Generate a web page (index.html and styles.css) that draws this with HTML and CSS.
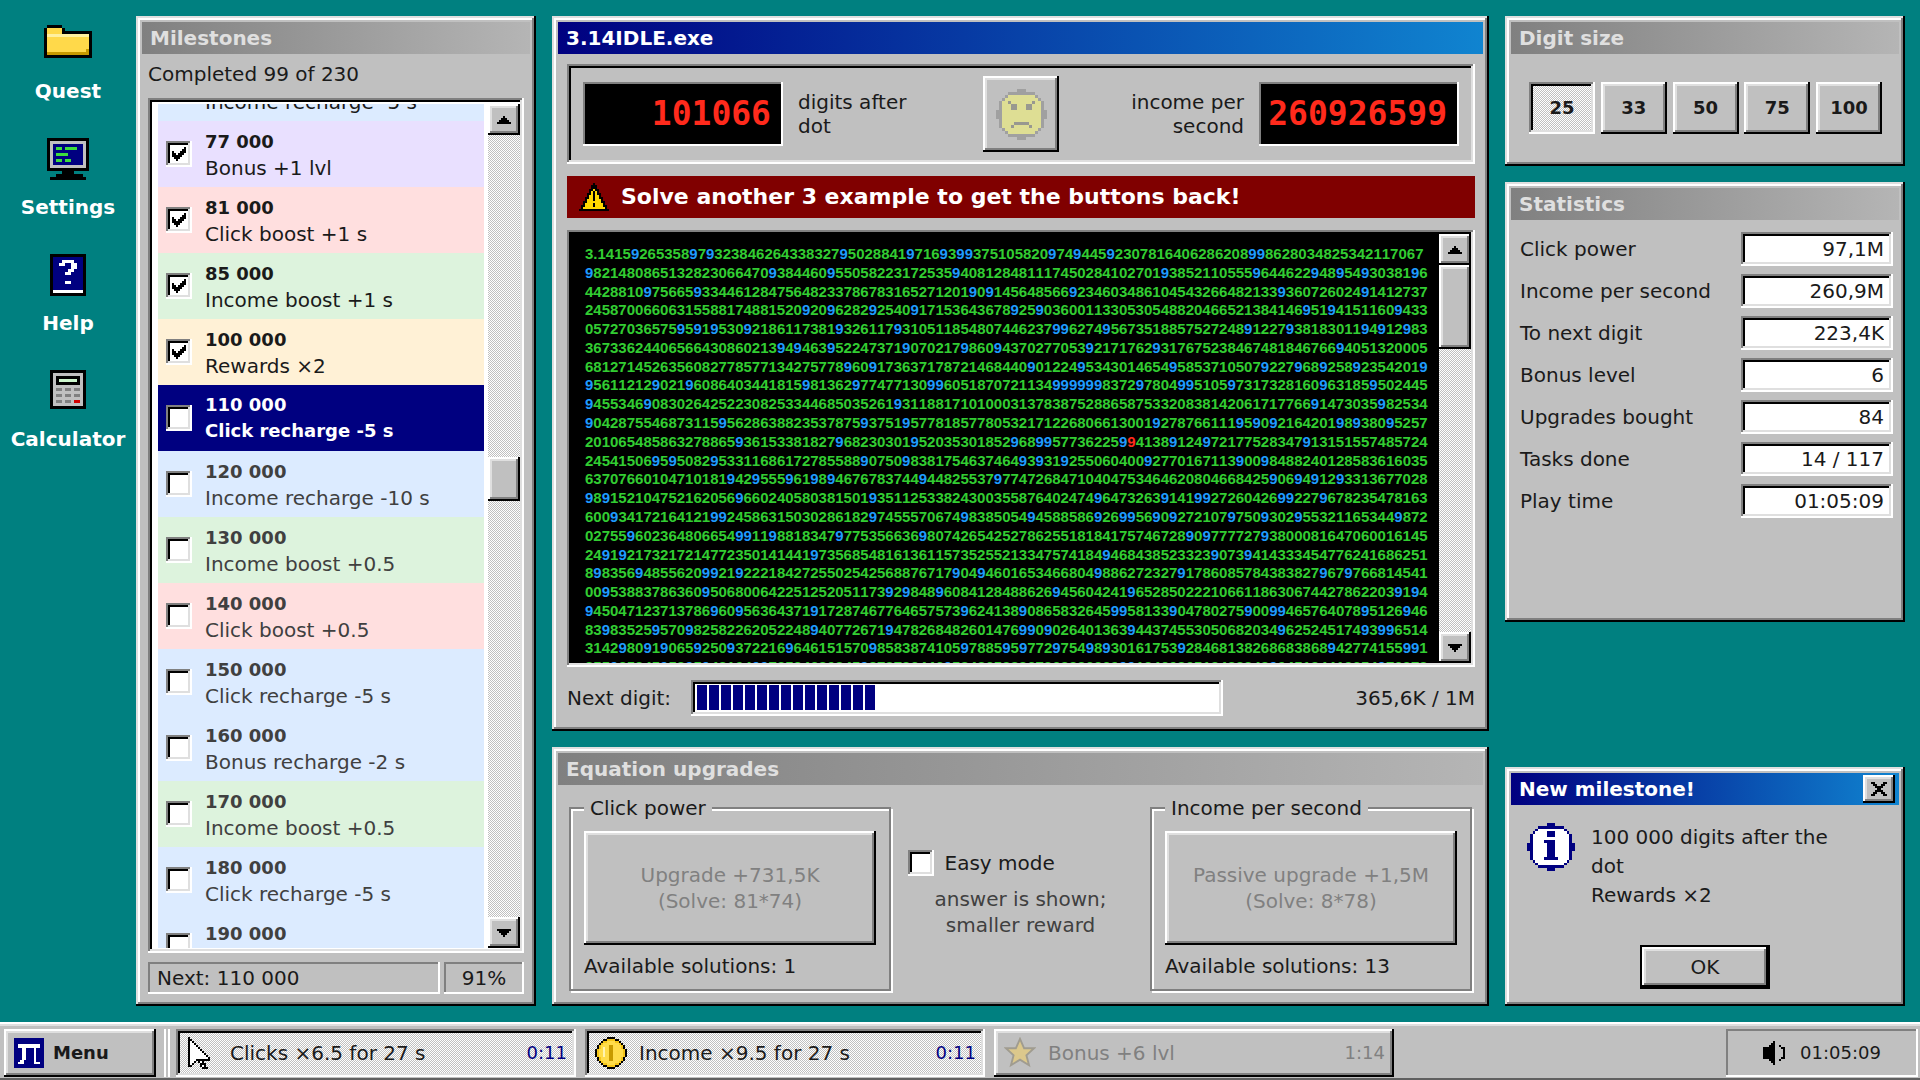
FILE: index.html
```html
<!DOCTYPE html>
<html lang="en">
<head>
<meta charset="utf-8">
<title>3.14IDLE.exe</title>
<link rel="stylesheet" href="styles.css">
</head>
<body>
<main class="desktop">
  <nav class="shortcuts">
    <a href="#quest" class="shortcut">
      <svg class="shortcut-icon" width="48" height="42" viewBox="0 0 16 14" shape-rendering="crispEdges"><path d="M1 1h5v1h1v1h9v9H0V2h1z" fill="#000"/><path d="M1 3V2h5v2h9v7H1z" fill="#ffd94a"/><path d="M1 4h14v1H1z" fill="#fff0a0"/><path d="M1 10h13v-1h1v2H1z" fill="#c79a00"/></svg>
      Quest</a>
    <a href="#settings" class="shortcut">
      <svg class="shortcut-icon" width="42" height="42" viewBox="0 0 14 14" shape-rendering="crispEdges"><path d="M0 0h14v11H9v1h3v1h1v1H1v-1h2v-1h2v-1H0z" fill="#000"/><path d="M1 1h12v9H1z" fill="#c0c0c0"/><path d="M2 2h10v7H2z" fill="#000080"/><path d="M3 3h2v1H3zM6 3h4v1H6zM3 5h4v1H3zM3 7h2v1H3zM6 7h2v1H6z" fill="#3ddc3d"/></svg>
      Settings</a>
    <a href="#help" class="shortcut">
      <svg class="shortcut-icon" width="36" height="42" viewBox="0 0 12 14" shape-rendering="crispEdges"><path d="M0 0h12v14H0z" fill="#000"/><path d="M1 1h10v11H1z" fill="#000080"/><path d="M1 12h10v1H1zM4 2h4v1h1v2H8v1H7v1H5V6h1V5h1V3H5v1H3V3h1zM5 9h2v1H5z" fill="#fff"/></svg>
      Help</a>
    <a href="#calculator" class="shortcut">
      <svg class="shortcut-icon" width="36" height="42" viewBox="0 0 12 14" shape-rendering="crispEdges"><path d="M0 0h12v13H0z" fill="#000"/><path d="M1 1h10v11H1z" fill="#c0c0c0"/><path d="M2 2h8v3H2z" fill="#000"/><path d="M3 3h6v1H3z" fill="#ccf5cc"/><path d="M2 6h2v1H2zM5 6h2v1H5zM8 6h2v1H8zM2 8h2v1H2zM5 8h2v1H5zM8 8h2v1H8zM2 10h2v1H2zM5 10h2v1H5z" fill="#808080"/><path d="M8 10h2v1H8z" fill="#d00000"/></svg>
      Calculator</a>
  </nav>

  <section class="window milestones">
    <h2 class="title">Milestones</h2>
    <p class="summary">Completed 99 of 230</p>
    <div class="list-box">
      <ul class="list">
        <li><label class="item blue first"><input class="check" type="checkbox" checked><span><b>73 000</b><br>Income recharge -5 s</span></label></li>
        <li><label class="item purple"><input class="check" type="checkbox" checked><span><b>77 000</b><br>Bonus +1 lvl</span></label></li>
        <li><label class="item red"><input class="check" type="checkbox" checked><span><b>81 000</b><br>Click boost +1 s</span></label></li>
        <li><label class="item green"><input class="check" type="checkbox" checked><span><b>85 000</b><br>Income boost +1 s</span></label></li>
        <li><label class="item cream"><input class="check" type="checkbox" checked><span><b>100 000</b><br>Rewards ×2</span></label></li>
        <li><label class="item current"><input class="check" type="checkbox"><span><b>110 000</b><br>Click recharge -5 s</span></label></li>
        <li><label class="item blue todo"><input class="check" type="checkbox"><span><b>120 000</b><br>Income recharge -10 s</span></label></li>
        <li><label class="item green todo"><input class="check" type="checkbox"><span><b>130 000</b><br>Income boost +0.5</span></label></li>
        <li><label class="item red todo"><input class="check" type="checkbox"><span><b>140 000</b><br>Click boost +0.5</span></label></li>
        <li><label class="item blue todo"><input class="check" type="checkbox"><span><b>150 000</b><br>Click recharge -5 s</span></label></li>
        <li><label class="item blue todo"><input class="check" type="checkbox"><span><b>160 000</b><br>Bonus recharge -2 s</span></label></li>
        <li><label class="item green todo"><input class="check" type="checkbox"><span><b>170 000</b><br>Income boost +0.5</span></label></li>
        <li><label class="item blue todo"><input class="check" type="checkbox"><span><b>180 000</b><br>Click recharge -5 s</span></label></li>
        <li><label class="item blue todo last-item"><input class="check" type="checkbox"><span><b>190 000</b></span></label></li>
      </ul>
      <div class="scrollbar">
        <button class="arrow" aria-label="Scroll up"><svg width="14" height="8" viewBox="0 0 7 4" shape-rendering="crispEdges"><path d="M3 0h1v1h1v1h1v1h1v1H0V3h1V2h1V1h1z"/></svg></button>
        <div class="track-before"></div>
        <div class="thumb"></div>
        <div class="track-after"></div>
        <button class="arrow" aria-label="Scroll down"><svg width="14" height="8" viewBox="0 0 7 4" shape-rendering="crispEdges"><path d="M0 0h7v1H6v1H5v1H4v1H3V3H2V2H1V1H0z"/></svg></button>
      </div>
    </div>
    <div class="status">
      <span class="status-cell grow">Next: 110 000</span>
      <span class="status-cell percent">91%</span>
    </div>
  </section>

  <div class="column">
    <section class="window game">
      <h1 class="title active">3.14IDLE.exe</h1>
      <div class="game-body">
        <div class="counters">
          <output class="led">101066</output>
          <span class="counter-label">digits after dot</span>
          <button class="face" aria-label="Mood" disabled>
            <svg width="51" height="51" viewBox="0 0 17 17" shape-rendering="crispEdges"><path d="M4 2h9v1h1v1h1v9h-1v1h-1v1H4v-1H3v-1H2V4h1V3h1z" fill="#dede94"/><path fill-rule="evenodd" d="M7 0h3v1h3v1h1v1h1v1h1v3h1v3h-1v3h-1v1h-1v1h-1v1h-3v1H7v-1H4v-1H3v-1H2v-1H1v-3H0V7h1V4h1V3h1V2h1V1h3zM4 2v1H3v1H2v9h1v1h1v1h9v-1h1v-1h1V4h-1V3h-1V2z" fill="#a0a0a0"/><path d="M4 4h1v1h2v2H5V5H4zM12 4h1v1h-1v2h-2V5h2zM6 11h5v1H6zM5 12h1v1H5zM11 12h1v1h-1z" fill="#989890"/></svg>
          </button>
          <span class="counter-label right">income per second</span>
          <output class="led">260926599</output>
        </div>
        <p class="banner">
          <svg width="30" height="28" viewBox="0 0 15 14" shape-rendering="crispEdges"><path d="M7 0h1v1h1v2h1v2h1v2h1v2h1v2h1v2h1v1H0v-1h1v-2h1V9h1V7h1V5h1V3h1V1h1z"/><path d="M7 3h1v1h1v2h1v2h1v2h1v2h1v1H2v-1h1v-2h1V8h1V6h1V4h1z" fill="#ffd800"/><path d="M7 4h1v5H7zM7 10h1v2H7z"/></svg>
          Solve another 3 example to get the buttons back!
        </p>
        <div class="digits-box">
          <div class="digits-view"><div class="digits" id="digits"></div></div>
          <div class="scrollbar">
            <button class="arrow" aria-label="Scroll up"><svg width="14" height="8" viewBox="0 0 7 4" shape-rendering="crispEdges"><path d="M3 0h1v1h1v1h1v1h1v1H0V3h1V2h1V1h1z"/></svg></button>
            <div class="thumb tall"></div>
            <div class="track-after"></div>
            <button class="arrow" aria-label="Scroll down"><svg width="14" height="8" viewBox="0 0 7 4" shape-rendering="crispEdges"><path d="M0 0h7v1H6v1H5v1H4v1H3V3H2V2H1V1H0z"/></svg></button>
          </div>
        </div>
        <div class="next">
          <span id="next-label">Next digit:</span>
          <div class="progress" role="progressbar" aria-labelledby="next-label" aria-valuenow="36"><i class="progress-fill"></i></div>
          <span class="next-value">365,6K / 1M</span>
        </div>
      </div>
    </section>

    <section class="window">
      <h2 class="title">Equation upgrades</h2>
      <div class="upgrades">
        <fieldset class="group">
          <legend>Click power</legend>
          <button class="button upgrade" disabled>Upgrade +731,5K<br>(Solve: 81*74)</button>
          <p>Available solutions: 1</p>
        </fieldset>
        <div class="easy">
          <label class="easy-label"><input class="check" type="checkbox">Easy mode</label>
          <p class="easy-hint">answer is shown;<br>smaller reward</p>
        </div>
        <fieldset class="group">
          <legend>Income per second</legend>
          <button class="button upgrade" disabled>Passive upgrade +1,5M<br>(Solve: 8*78)</button>
          <p>Available solutions: 13</p>
        </fieldset>
      </div>
    </section>
  </div>

  <div class="column">
    <section class="window">
      <h2 class="title">Digit size</h2>
      <div class="sizes">
        <button class="button size pressed">25</button>
        <button class="button size">33</button>
        <button class="button size">50</button>
        <button class="button size">75</button>
        <button class="button size">100</button>
      </div>
    </section>
    <section class="window stats">
      <h2 class="title">Statistics</h2>
      <div class="stat-rows">
        <label class="stat" for="s1">Click power <input id="s1" class="field" value="97,1M" readonly></label>
        <label class="stat" for="s2">Income per second <input id="s2" class="field" value="260,9M" readonly></label>
        <label class="stat" for="s3">To next digit <input id="s3" class="field" value="223,4K" readonly></label>
        <label class="stat" for="s4">Bonus level <input id="s4" class="field" value="6" readonly></label>
        <label class="stat" for="s5">Upgrades bought <input id="s5" class="field" value="84" readonly></label>
        <label class="stat" for="s6">Tasks done <input id="s6" class="field" value="14 / 117" readonly></label>
        <label class="stat" for="s7">Play time <input id="s7" class="field" value="01:05:09" readonly></label>
      </div>
    </section>
    <section class="window dialog" role="dialog" aria-labelledby="dialog-title">
      <h2 class="title active" id="dialog-title">New milestone!
        <button class="button close" aria-label="Close"><svg width="16" height="14" viewBox="0 0 8 7" shape-rendering="crispEdges"><path d="M0 0h2v1h1v1h2V1h1V0h2v1H7v1H6v1H5v1h1v1h1v1h1v1H6V6H5V5H3v1H2v1H0V6h1V5h1V4h1V3H2V2H1V1H0z"/></svg></button>
      </h2>
      <div class="dialog-body">
        <svg width="48" height="48" viewBox="0 0 17 17" shape-rendering="crispEdges"><path d="M4 2h9v1h1v1h1v9h-1v1h-1v1H4v-1H3v-1H2V4h1V3h1z" fill="#fff"/><path fill-rule="evenodd" d="M7 0h3v1h3v1h1v1h1v1h1v3h1v3h-1v3h-1v1h-1v1h-1v1h-3v1H7v-1H4v-1H3v-1H2v-1H1v-3H0V7h1V4h1V3h1V2h1V1h3zM4 2v1H3v1H2v9h1v1h1v1h9v-1h1v-1h1V4h-1V3h-1V2zM7 3h3v2H7zM6 6h4v6h1v1H6v-1h1V7H6z" fill="#000080"/></svg>
        <p>100 000 digits after the dot<br>Rewards ×2</p>
      </div>
      <button class="button ok">OK</button>
    </section>
  </div>
</main>

<footer class="taskbar">
  <button class="button menu">
    <svg width="30" height="30" viewBox="0 0 15 15" shape-rendering="crispEdges"><path d="M0 0h15v15H0z" fill="#000080"/><path d="M2 3h11v2h-2v7h2v1h-3V5H6v6H5v2H2v-1h1v-1h1V5H2z" fill="#fff"/></svg>
    Menu</button>
  <span class="divider"></span>
  <button class="button task pressed">
    <svg width="32" height="32" viewBox="-1 0 16 16" shape-rendering="crispEdges"><path d="M0 0h1v1h1v1h1v1h1v1h1v1h1v1h1v1h1v1h1v1h1v1h1v2H8v1h1v2h1v1H7v-1H6v-2H5v-1H4v1H3v1H2v1H0z"/><path d="M1 2h1v1h1v1h1v1h1v1h1v1h1v1h1v1h1v1h1v1H6v1h1v2h1v1H7v-2H6v-2H4v1H3v1H2v1H1z" fill="#fff"/></svg>
    <span class="grow">Clicks ×6.5 for 27 s</span><time>0:11</time></button>
  <button class="button task pressed">
    <svg width="32" height="32" viewBox="0 0 16 16" shape-rendering="crispEdges"><path d="M6 0h4v1h2v1h1v1h1v1h1v2h1v4h-1v2h-1v1h-1v1h-1v1h-2v1H6v-1H4v-1H3v-1H2v-1H1v-2H0V6h1V4h1V3h1V2h1V1h2z"/><path d="M6 1h4v1h2v1h1v1h1v2h1v4h-1v2h-1v1h-1v1h-2v1H6v-1H4v-1H3v-1H2v-2H1V6h1V4h1V3h1V2h2z" fill="#f5c518"/><path d="M6 2h4v1h2v1h1v2h1v4h-1v2h-1v1h-2v1H6v-1H4v-1H3v-2H2V6h1V4h1V3h2z" fill="#ffdc4a"/><path d="M4 5h1v5H4z" fill="#fff3b0"/><path d="M7 4h2v8H7z" fill="#c79a00"/></svg>
    <span class="grow">Income ×9.5 for 27 s</span><time>0:11</time></button>
  <button class="button task" disabled>
    <svg width="32" height="32" viewBox="0 0 17 17"><path d="M8.500 1l2.200 5h5.300l-4.100 3.700 1.400 5.300-4.800-3-4.800 3 1.400-5.300L1 6h5.300z" fill="#dcc88c" stroke="#a09c90"/></svg>
    <span class="grow">Bonus +6 lvl</span><time>1:14</time></button>
  <div class="tray">
    <svg width="22" height="24" viewBox="0 0 11 12" shape-rendering="crispEdges"><path d="M0 3h3V2h1V1h1V0h1v12H5v-1H4v-1H3V9H0zM8 2h1v1H8zM9 3h2v6H9V8h1V4H9zM8 9h1v1H8z"/></svg>
    <time>01:05:09</time>
  </div>
</footer>
<script src="script.js"></script>
</body>
</html>
```
FILE: styles.css
```css
:root {
  --face: #c0c0c0;
  --navy: #000080;
  --raised: inset -2px -2px #000, inset 2px 2px #fff, inset -4px -4px #808080, inset 4px 4px #dfdfdf;
  --frame: inset -2px -2px #000, inset 2px 2px #dfdfdf, inset -4px -4px #808080, inset 4px 4px #fff;
  --sunken: inset -2px -2px #fff, inset 2px 2px #808080, inset -4px -4px #dfdfdf, inset 4px 4px #000;
  --thin: inset -2px -2px #fff, inset 2px 2px #808080;
  --dither: #fff url('data:image/svg+xml,<svg xmlns="http://www.w3.org/2000/svg" width="2" height="2" shape-rendering="crispEdges"><path d="M0 0h1v1H0zM1 1h1v1H1z" fill="%23c0c0c0"/></svg>');
}

* { box-sizing: border-box; }

body {
  margin: 0;
  height: 100vh;
  display: flex;
  flex-direction: column;
  overflow: hidden;
  background: #008080;
  color: #1a1a1a;
  font: 20px/26px "DejaVu Sans", sans-serif;
}

h1, h2, p, ul, fieldset { margin: 0; padding: 0; }
ul { list-style: none; }
button, input { font: inherit; color: inherit; margin: 0; border: 0; padding: 0; }
svg { flex: none; display: block; }

.desktop {
  flex: 1;
  min-height: 0;
  display: grid;
  grid-template-columns: 120px 400px minmax(0, 1fr) 400px;
  grid-template-rows: minmax(0, 1fr);
  gap: 16px;
  padding: 16px 15px 16px 0;
}

.column { display: flex; flex-direction: column; gap: 16px; min-height: 0; }
.grow { flex: 1; text-align: left; }

/* Desktop shortcuts */
.shortcuts { display: flex; flex-direction: column; gap: 28px; padding-top: 6px; width: 136px; }
.shortcut {
  display: flex;
  flex-direction: column;
  align-items: center;
  gap: 14px;
  height: 88px;
  color: #fff;
  font-weight: bold;
  text-decoration: none;
}

/* Windows */
.window { display: flex; flex-direction: column; padding: 6px; background: var(--face); box-shadow: var(--frame); }
.title {
  display: flex;
  align-items: center;
  justify-content: space-between;
  height: 32px;
  padding: 0 4px 0 8px;
  background: linear-gradient(90deg, #808080, #b5b5b5);
  color: #dfdfdf;
  font-size: 20px;
  line-height: 32px;
}
.title.active { background: linear-gradient(90deg, #000080, #1084d0); color: #fff; }

.button { background: var(--face); box-shadow: var(--raised); }
.button:disabled { color: #808080; }
.button.pressed { background: var(--dither); box-shadow: var(--sunken); }

.check {
  appearance: none;
  flex: none;
  width: 26px;
  height: 26px;
  background: #fff;
  box-shadow: var(--sunken);
}
.check:checked {
  background: #fff url('data:image/svg+xml,<svg xmlns="http://www.w3.org/2000/svg" viewBox="0 0 7 7" shape-rendering="crispEdges"><path d="M6 0h1v3H6v1H5v1H4v1H3v1H2V6H1V5H0V2h1v1h1v1h1V3h1V2h1V1h1z"/></svg>') center / 14px 14px no-repeat;
}

/* Milestones */
.summary { padding: 7px 6px 11px; }
.list-box { flex: 1; min-height: 0; display: flex; margin: 0 6px; padding: 6px 4px 5px 10px; background: #fff; box-shadow: var(--sunken); }
.list { flex: 1; min-height: 0; overflow: hidden; }
.item { display: flex; align-items: center; gap: 13px; height: 66px; padding: 0 8px; }
.item b { font-size: 18px; }
.item.first { margin-top: -49px; }
.item.last-item span { align-self: flex-start; padding-top: 7px; }
.purple { background: #e9e0ff; }
.red { background: #ffdfdf; }
.green { background: #ddf3dd; }
.cream { background: #fff1d6; }
.blue { background: #dcebff; }
.current { background: var(--navy); color: #fff; font-weight: bold; font-size: 18px; }
.todo { color: #404040; }
.list-box .scrollbar { margin-left: 4px; }
.status { display: flex; gap: 4px; padding: 9px 6px 6px; }
.status-cell { height: 32px; padding: 0 9px; line-height: 32px; box-shadow: var(--thin); }
.percent { width: 80px; text-align: center; }

.scrollbar { flex: none; display: flex; flex-direction: column; width: 32px; background: var(--dither); }
.arrow { display: grid; place-items: center; height: 31px; background: var(--face); box-shadow: var(--raised); }
.track-before { flex: 324; }
.track-after { flex: 418; }
.thumb { height: 44px; background: var(--face); box-shadow: var(--raised); }
.thumb.tall { height: 84px; }

/* Main game window */
.game { flex: 1; min-height: 0; }
.game-body { flex: 1; min-height: 0; display: flex; flex-direction: column; gap: 12px; padding: 10px 8px 8px 9px; }
.counters { display: flex; align-items: center; height: 100px; padding: 0 16px; box-shadow: var(--sunken); }
.led {
  width: 200px;
  height: 64px;
  padding-right: 12px;
  background: #000;
  box-shadow: var(--thin);
  color: #ff2a1c;
  font: bold 33px/64px "DejaVu Sans Mono", monospace;
  text-align: right;
}
.counter-label { flex: 1; padding: 0 68px 0 15px; line-height: 24px; }
.counter-label.right { padding: 0 15px 0 68px; text-align: right; }
.face { display: grid; place-items: center; width: 76px; height: 76px; background: var(--face); box-shadow: var(--raised); }
.banner {
  display: flex;
  align-items: center;
  gap: 12px;
  height: 42px;
  padding: 0 12px;
  background: #800000;
  color: #fff;
  font-size: 22px;
  font-weight: bold;
}
.digits-box { flex: 1; min-height: 0; display: flex; padding: 4px; background: #000; box-shadow: var(--sunken); }
.digits-view { flex: 1; min-width: 0; overflow: hidden; padding: 11px 0 0 14px; }
.digits {
  display: grid;
  grid-auto-rows: 1fr;
  height: 432px;
  color: #32cd32;
  font: bold 15px/18px "Liberation Sans", sans-serif;
  font-kerning: none;
  white-space: nowrap;
}
.nine { color: #1e9bff; }
.last { color: #ff2a1c; }
.digits-box .track-after { flex: 1; }
.next { display: flex; align-items: center; gap: 20px; height: 38px; }
.progress { width: 532px; height: 36px; padding: 5px 6px; background: #fff; box-shadow: var(--sunken); }
.progress-fill { display: block; width: 178px; height: 25px; background: repeating-linear-gradient(90deg, var(--navy) 0 10px, #fff 10px 12px); }
.next-value { margin-left: auto; }

/* Upgrades */
.upgrades { display: flex; justify-content: space-between; padding: 10px 11px 9px 11px; }
.group { width: 322px; height: 196px; padding: 0 13px; border: 2px solid #808080; box-shadow: 2px 2px #fff, inset 2px 2px #fff; }
.group legend { padding: 0 6px; background: var(--face); }
.upgrade { display: block; width: 100%; height: 114px; margin: 10px 0 8px; }
.easy { width: 226px; padding-top: 55px; }
.easy-label { display: flex; align-items: center; gap: 11px; }
.easy-hint { margin-top: 10px; color: #404040; text-align: center; }

/* Right column */
.sizes { display: flex; justify-content: space-between; padding: 28px 17px 26px 18px; }
.size { width: 66px; height: 52px; font-size: 18px; font-weight: bold; }
.stats { min-height: 440px; }
.stat-rows { display: flex; flex-direction: column; gap: 8px; padding: 12px 6px 12px 9px; }
.stat { display: flex; align-items: center; justify-content: space-between; height: 34px; }
.field { width: 152px; height: 34px; padding: 0 9px; background: #fff; box-shadow: var(--sunken); text-align: right; }
.dialog { margin-top: auto; min-height: 239px; }
.close { display: grid; place-items: center; width: 32px; height: 28px; }
.dialog-body { display: flex; gap: 16px; padding: 18px 36px 0 16px; }
.dialog-body p { line-height: 29px; }
.ok { align-self: center; width: 130px; height: 44px; margin: auto 0 11px; border: 2px solid #000; }

/* Taskbar */
.taskbar { display: flex; align-items: stretch; height: 58px; padding: 7px 2px 3px 4px; background: var(--face); box-shadow: inset 0 2px #fff, inset 0 4px #dfdfdf, inset 0 -2px #606060; }
.menu { display: flex; align-items: center; gap: 9px; width: 152px; padding: 0 10px; font-size: 18px; font-weight: bold; }
.divider { width: 6px; margin: 0 6px 0 8px; border: solid; border-width: 0 2px; border-color: #808080 #fff; }
.task { display: flex; align-items: center; gap: 12px; width: 400px; margin-right: 9px; padding: 0 9px 0 10px; white-space: nowrap; }
.task time, .tray time { color: var(--navy); font-size: 18px; }
.task:disabled, .task:disabled time { color: #808080; }
.tray { display: flex; align-items: center; justify-content: center; gap: 15px; width: 192px; margin-left: auto; box-shadow: var(--thin); }
.tray time { color: inherit; }
```
FILE: script.js
```js
// Machin's formula in fixed point, ten guard digits.
function pi(count) {
  const one = 10n ** BigInt(count + 10);
  const arctan = (x) => {
    let term = one / x;
    let sum = term;
    for (let n = 3n, sign = -1n; term > 0n; n += 2n, sign = -sign) {
      term /= x * x;
      sum += sign * (term / n);
    }
    return sum;
  };
  const text = String(4n * (4n * arctan(5n) - arctan(239n)));
  return "3." + text.slice(1, count + 1);
}

const COLUMNS = 101;
const ROWS = 23;
const LAST_FOUND = 1075;

const digits = pi(COLUMNS * ROWS - 2);
const view = document.getElementById("digits");
for (let row = 0; row < ROWS; row++) {
  const line = document.createElement("div");
  line.innerHTML = digits
    .slice(row * COLUMNS, (row + 1) * COLUMNS)
    .replace(/9/g, (nine, i) => {
      const kind = row * COLUMNS + i === LAST_FOUND ? "last" : "nine";
      return `<span class="${kind}">9</span>`;
    });
  view.append(line);
}
```
